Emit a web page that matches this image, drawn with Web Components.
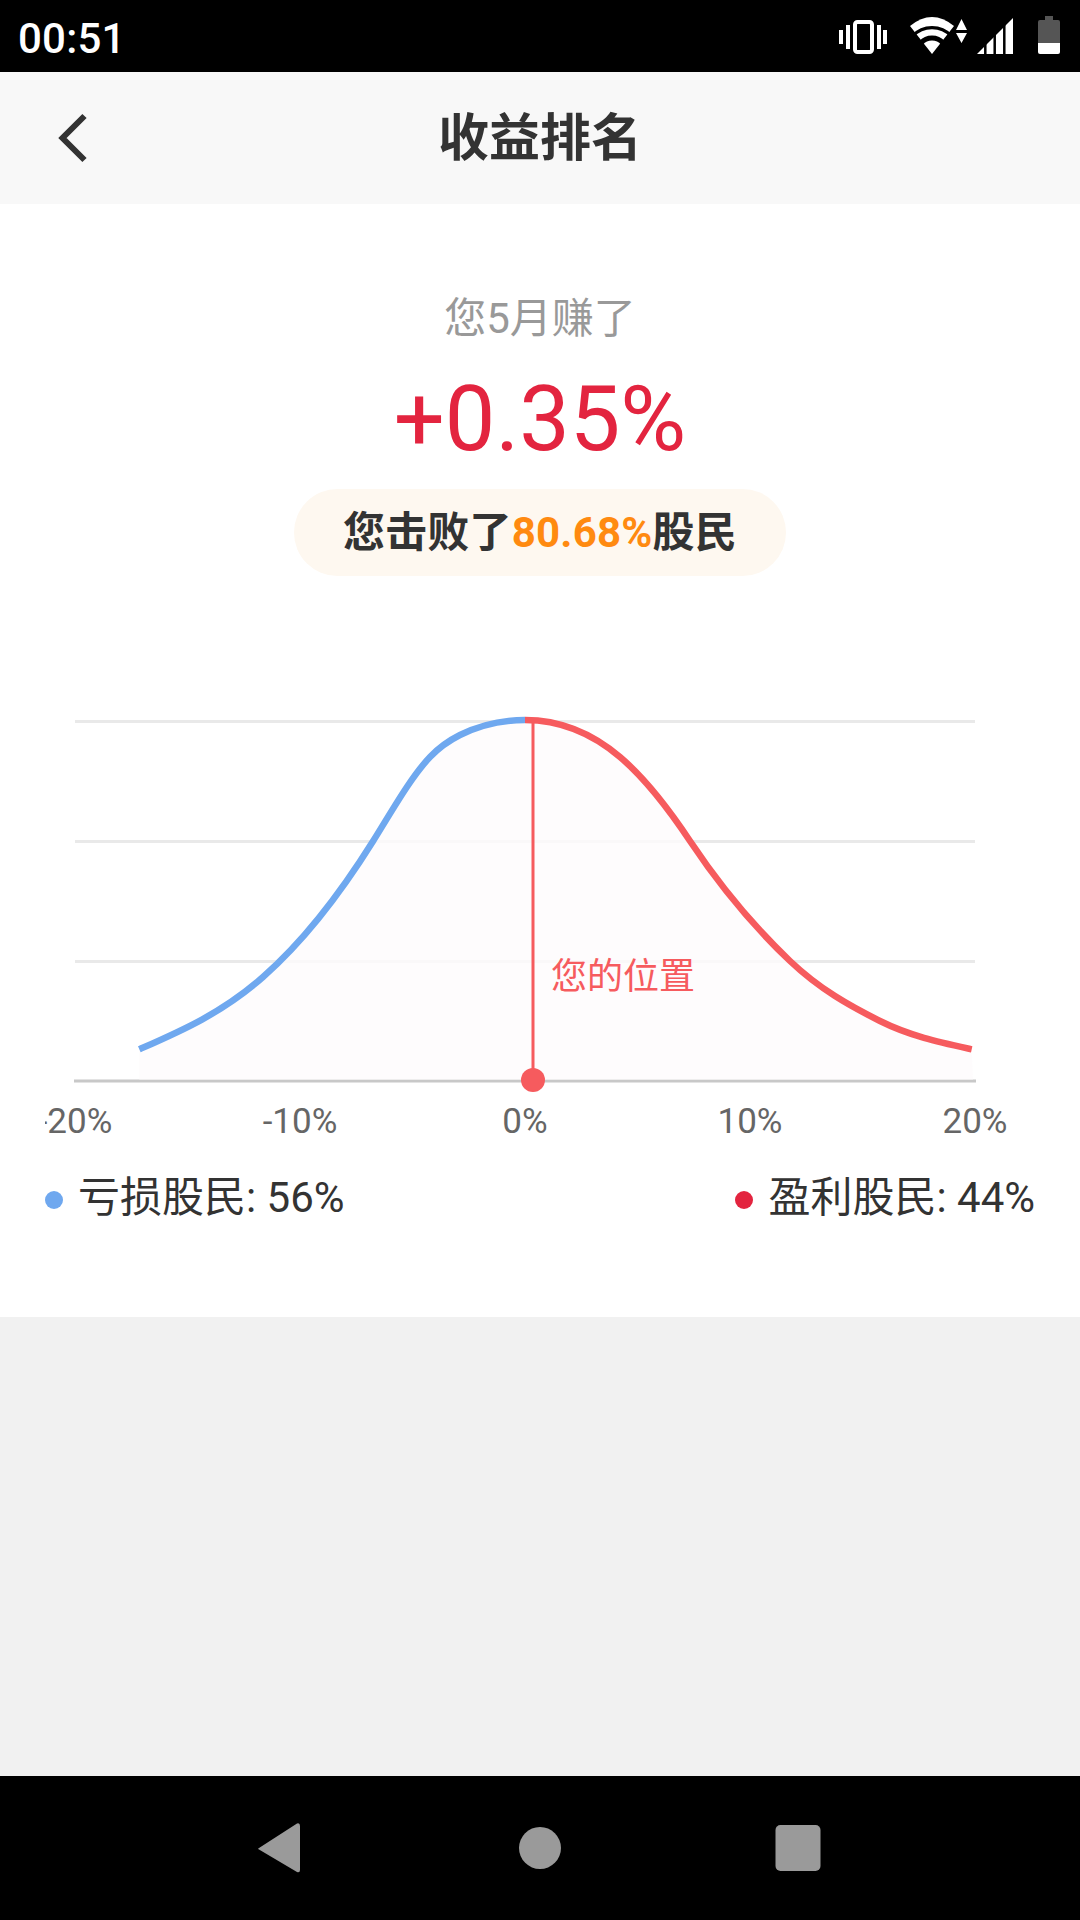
<!DOCTYPE html>
<html lang="zh"><head><meta charset="utf-8"><title>收益排名</title>
<style>
html,body{margin:0;padding:0;background:#f1f1f1}
body{width:1080px;height:1920px;font-family:Roboto,"Noto Sans CJK SC",sans-serif;display:flex;flex-direction:column}
</style></head><body>
<status-bar time="00:51"></status-bar>
<nav-header title="收益排名"></nav-header>
<rank-card>
  <earn-summary label="您5月赚了" value="+0.35%"></earn-summary>
  <rank-pill>您击败了<b>80.68%</b>股民</rank-pill>
  <bell-chart note="您的位置"></bell-chart>
  <chart-legend>
    <legend-item color="#6fa8ef">亏损股民: 56%</legend-item>
    <legend-item color="#e3243f">盈利股民: 44%</legend-item>
  </chart-legend>
</rank-card>
<page-rest></page-rest>
<android-nav></android-nav>
<script>
function def(name, html){
  customElements.define(name, class extends HTMLElement{
    constructor(){super();this.attachShadow({mode:'open'}).innerHTML=html;}
  });
}
const FONT='Roboto,"Noto Sans CJK SC",sans-serif';
customElements.define('status-bar', class extends HTMLElement{
  connectedCallback(){ if(this.shadowRoot) return;
    this.attachShadow({mode:'open'}).innerHTML=`<style>
    :host{display:flex;align-items:center;height:72px;background:#000;color:#fff;padding:0 20px 0 18px;box-sizing:border-box;flex:none;font-family:${FONT}}
    .t{font-size:42px;font-weight:500;line-height:72px;height:72px;padding-top:3px;box-sizing:border-box;flex:1;letter-spacing:.2px}
    svg{display:block;height:40px}
    .v{width:48px;margin-right:23px}.w{width:57px;margin-right:10px}.s{width:36px;margin-right:25px}.b{width:22px}
    </style>
    <span class="t">${this.getAttribute('time')}</span>
    <svg class="v" viewBox="839 16 48 40"><rect x="855" y="22" width="17" height="30" rx="2.5" fill="none" stroke="#fff" stroke-width="4"/><g fill="#fff"><rect x="839" y="30" width="4" height="14"/><rect x="846" y="25" width="4" height="24"/><rect x="877" y="25" width="4" height="24"/><rect x="883" y="30" width="4" height="14"/></g></svg>
    <svg class="w" viewBox="910 16 57 40"><path d="M932 54 L910 26 Q932 8 954 26Z" fill="#fff"/><g fill="none" stroke="#000"><path d="M912.6 37.5 A26.5 26.5 0 0 1 951.4 37.5" stroke-width="3.2" transform="translate(0,-1.5)" /><path d="M921 45.5 A14.5 14.5 0 0 1 943 45.5" stroke-width="5" transform="translate(0,-2.5)"/></g><path d="M961.5 19 L967 30 H956Z M956 33 H967 L961.5 43Z" fill="#fff"/></svg>
    <svg class="s" viewBox="977 16 36 40"><path d="M977 54 L1013 18 V54Z" fill="#fff"/><g stroke="#000" stroke-width="2.5"><path d="M985.3 56V40M994.7 56V30M1004.3 56V20"/></g></svg>
    <svg class="b" viewBox="1038 16 22 40"><path d="M1045 16h8v4h5a2 2 0 0 1 2 2v21h-22V22a2 2 0 0 1 2-2h5z" fill="#555"/><path d="M1038 43h22v9a2 2 0 0 1-2 2h-18a2 2 0 0 1-2-2z" fill="#fff"/></svg>`;
  }
});
customElements.define('nav-header', class extends HTMLElement{
  connectedCallback(){ if(this.shadowRoot) return;
    this.attachShadow({mode:'open'}).innerHTML=`<style>
    :host{display:grid;grid-template-columns:1fr auto 1fr;align-items:center;height:132px;background:#f8f8f8;flex:none;font-family:${FONT}}
    svg{display:block;width:32px;height:52px;margin-left:57px}
    h1{margin:0;font-size:51px;font-weight:700;color:#333;line-height:132px;padding-top:1px;box-sizing:border-box;height:132px}
    </style>
    <svg viewBox="57 112 32 52"><path d="M84.5 116 L62.5 138 L84.5 160" fill="none" stroke="#333" stroke-width="6"/></svg>
    <h1>${this.getAttribute('title')}</h1><span></span>`;
  }
});
def('rank-card',`<style>:host{display:block;height:1113px;background:#fff;flex:none;box-sizing:border-box;padding-top:94px}</style><slot></slot>`);
customElements.define('earn-summary', class extends HTMLElement{
  connectedCallback(){ if(this.shadowRoot) return;
    this.attachShadow({mode:'open'}).innerHTML=`<style>
    :host{display:block;text-align:center;font-family:${FONT}}
    .l{font-size:42px;line-height:42px;color:#999}
    .v{font-size:90px;line-height:100px;margin-top:30px;color:#e3243f;height:119px}
    </style><div class="l">${this.getAttribute('label')}</div><div class="v">${this.getAttribute('value')}</div>`;
  }
});
def('rank-pill',`<style>
:host{display:flex;height:87px;width:492px;margin:0 auto;align-items:center;justify-content:center;background:#fef8f0;border-radius:44px;font:700 42px/87px ${FONT};letter-spacing:.2px;color:#333;white-space:nowrap}
::slotted(b){color:#ff8a10;font-weight:700}
</style><span><slot></slot></span>`);
customElements.define('bell-chart', class extends HTMLElement{
  connectedCallback(){ if(this.shadowRoot) return;
    // knots: x, y, slope dy/dx
    const L=[[139.3,1049.3,-.44],[263,977,-.88],[373,841.3,-1.6],[430,757,-1.05],[460,735,-.5],[525,720,0]];
    const R=[[525,720,0],[620,757,.85],[690,841,1.5],[790,961,.95],[880,1021,.5],[971.7,1049.3,.22]];
    const seg=p=>{let d='';for(let i=0;i<p.length-1;i++){const a=p[i],b=p[i+1],h=(b[0]-a[0])/3;
      d+=`C${(a[0]+h).toFixed(1)} ${(a[1]+h*a[2]).toFixed(1)} ${(b[0]-h).toFixed(1)} ${(b[1]-h*b[2]).toFixed(1)} ${b[0]} ${b[1]}`;}return d;};
    const left=`M139.3 1049.3`+seg(L), right=`M525 720`+seg(R);
    const labels=['-20%','-10%','0%','10%','20%'].map(t=>`<span>${t}</span>`).join('');
    this.attachShadow({mode:'open'}).innerHTML=`<style>
    :host{display:block;position:relative;margin-top:124px;font-family:${FONT}}
    svg{display:block;width:1080px;height:400px}
    .note{position:absolute;left:551px;top:255px;font-size:36px;line-height:44px;color:#f65b5e}
    .axis{margin-left:45px;width:1035px;overflow:hidden;height:42px}
    .track{display:grid;grid-template-columns:repeat(5,225px);margin-left:-82.5px;font-size:35px;line-height:42px;padding-top:1px;color:#666;text-align:center;width:1125px}
    </style>
    <svg viewBox="0 700 1080 400">
      <g stroke="#e9e9e9" stroke-width="3"><path d="M75 721.5H975M75 841.5H975M75 961.5H975"/></g>
      <path d="M74 1081H976" stroke="#c8c8c8" stroke-width="3"/>
      <path d="${left}${seg(R)}L973 1079.5H139.3Z" fill="#fefbfc" fill-opacity=".8"/>
      <path d="${right}" fill="none" stroke="#f65b5e" stroke-width="6.5"/>
      <path d="${left}" fill="none" stroke="#6fa8ef" stroke-width="6.5"/>
      <path d="M533 722V1080" stroke="#f65b5e" stroke-width="3"/>
      <circle cx="533" cy="1080" r="12" fill="#f65b5e"/>
    </svg>
    <span class="note">${this.getAttribute('note')}</span>
    <div class="axis"><div class="track">${labels}</div></div>`;
  }
});
def('chart-legend',`<style>:host{display:flex;justify-content:space-between;padding:31px 45px 0;height:50px}</style><slot></slot>`);
customElements.define('legend-item', class extends HTMLElement{
  connectedCallback(){ if(this.shadowRoot) return;
    this.attachShadow({mode:'open'}).innerHTML=`<style>
    :host{display:flex;align-items:center;gap:15px;font:400 42px/50px ${FONT};color:#333;white-space:nowrap}
    i{display:block;width:18px;height:18px;border-radius:50%;background:${this.getAttribute('color')};margin-top:4px}
    </style><i></i><span><slot></slot></span>`;
  }
});
def('page-rest',`<style>:host{display:block;flex:1;background:#f1f1f1}</style>`);
def('android-nav',`<style>
:host{display:flex;align-items:center;height:144px;background:#000;flex:none;padding-left:257px;box-sizing:border-box}
svg{display:block;height:50px}
.c{margin-left:219px}.q{margin-left:214px}
</style>
<svg width="43" viewBox="257 1823 43 50"><path d="M259 1848 L297 1823.5 Q300 1822.5 300 1826 V1870 Q300 1873 297 1872 L259 1849.5 Q257.5 1848.6 259 1848Z" fill="#9a9a9a"/></svg>
<svg class="c" width="42" viewBox="519 1823 42 50"><circle cx="540" cy="1848" r="21" fill="#9a9a9a"/></svg>
<svg class="q" width="46" viewBox="775 1823 46 50"><rect x="775.5" y="1825" width="45" height="46" rx="5" fill="#9a9a9a"/></svg>`);
</script>
</body></html>
